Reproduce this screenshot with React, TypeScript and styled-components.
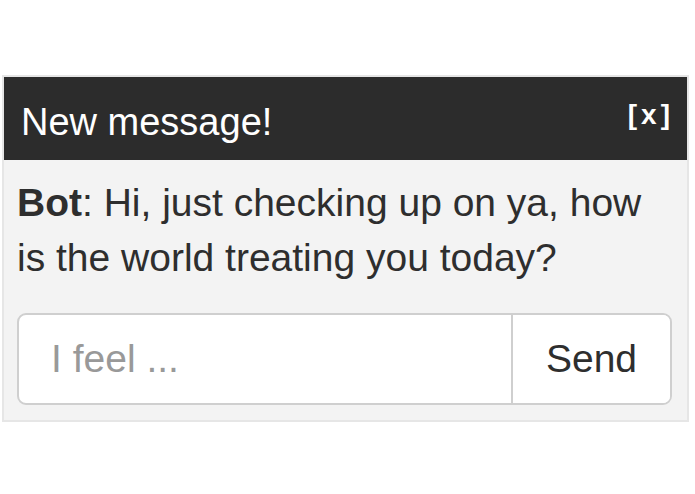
import styled, { createGlobalStyle } from 'styled-components'

const GlobalStyle = createGlobalStyle`
    html, body {
        margin: 0;
        padding: 0;
        background: #ffffff;
        font-family: "Liberation Sans", Arial, sans-serif;
    }
`

const Page = styled.div`
    padding: 75px 6px 0 2px;
`

const Panel = styled.div`
    width: 687px;
    box-sizing: border-box;
    background: #f3f3f3;
    border: 2px solid #e6e6e6;
`

const Header = styled.div`
    height: 83px;
    box-sizing: border-box;
    padding: 26px 17px 0 17px;
    background: #2c2c2c;
    display: flex;
    justify-content: space-between;
    align-items: flex-start;
`

const Title = styled.h1`
    margin: 0;
    font-size: 38px;
    line-height: 38px;
    font-weight: 400;
    color: #ffffff;
`

const Close = styled.span`
    margin-top: -5px;
    margin-right: -4px;
    font-size: 28px;
    line-height: 34px;
    font-weight: 700;
    letter-spacing: 4px;
    color: #ffffff;
    cursor: pointer;
`

const Body = styled.div`
    padding: 15px 15px 15px 13px;
`

const Message = styled.p`
    margin: 0 0 28px 0;
    max-width: 634px;
    font-size: 39px;
    line-height: 55px;
    color: #2e2e2e;
    > b {
        font-weight: 700;
    }
`

const InputGroup = styled.div`
    display: flex;
    height: 92px;
    box-sizing: border-box;
    border: 2px solid #cfcfcf;
    border-radius: 9px;
    background: #ffffff;
    overflow: hidden;
`

const Field = styled.input`
    flex: 1;
    min-width: 0;
    border: none;
    outline: none;
    padding: 0 0 0 32px;
    background: transparent;
    font-family: "Liberation Sans", Arial, sans-serif;
    font-size: 39px;
    color: #2e2e2e;
    &::placeholder {
        color: #999999;
    }
`

const SendButton = styled.button`
    width: 159px;
    border: none;
    border-left: 2px solid #cfcfcf;
    background: #ffffff;
    font-family: "Liberation Sans", Arial, sans-serif;
    font-size: 39px;
    color: #2e2e2e;
    padding: 0;
    cursor: pointer;
`

export default function App() {
    return (
        <Page>
            <GlobalStyle />
            <Panel>
                <Header>
                    <Title>New message!</Title>
                    <Close>[x]</Close>
                </Header>
                <Body>
                    <Message>
                        <b>Bot</b>: Hi, just checking up on ya, how is the world treating you today?
                    </Message>
                    <InputGroup>
                        <Field placeholder="I feel ..." />
                        <SendButton>Send</SendButton>
                    </InputGroup>
                </Body>
            </Panel>
        </Page>
    )
}
